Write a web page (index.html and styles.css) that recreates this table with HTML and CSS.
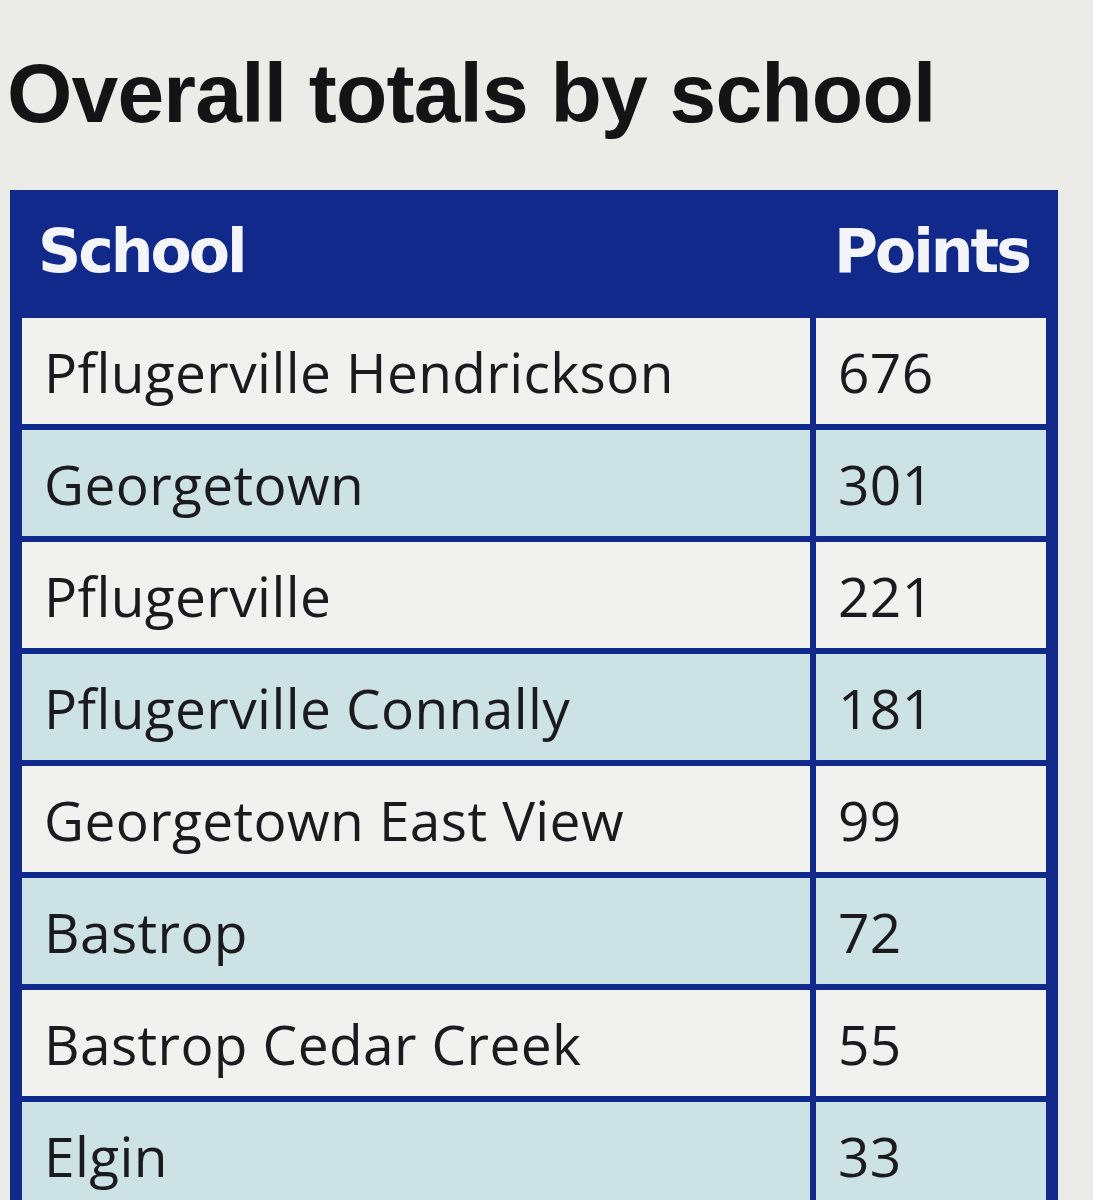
FILE: index.html
```html
<!DOCTYPE html>
<html>
<head>
<meta charset="utf-8">
<link rel="stylesheet" href="styles.css">
</head>
<body>
<h1 class="title">Overall totals by school</h1>
<div class="table">
  <div class="th th-school">School</div>
  <div class="th th-points">Points</div>
  <div class="td name">Pflugerville Hendrickson</div><div class="td pts">676</div>
  <div class="td name alt">Georgetown</div><div class="td pts alt">301</div>
  <div class="td name">Pflugerville</div><div class="td pts">221</div>
  <div class="td name alt">Pflugerville Connally</div><div class="td pts alt">181</div>
  <div class="td name">Georgetown East View</div><div class="td pts">99</div>
  <div class="td name alt">Bastrop</div><div class="td pts alt">72</div>
  <div class="td name">Bastrop Cedar Creek</div><div class="td pts">55</div>
  <div class="td name alt">Elgin</div><div class="td pts alt">33</div>
  <div class="td name"></div><div class="td pts"></div>
</div>
</body>
</html>
```
FILE: styles.css
```css
html, body {
  margin: 0;
  padding: 0;
  background: #ebebe7;
  overflow: hidden;
}
body {
  padding: 0 35px 0 10px;
  font-family: "Open Sans", "Liberation Sans", sans-serif;
  color: #1b1b1f;
}
.title {
  margin: 0 0 0 -3px;
  padding: 43px 0 0 0;
  height: 190px;
  box-sizing: border-box;
  font-family: "Liberation Sans", Arial, sans-serif;
  font-weight: 700;
  font-size: 84px;
  line-height: 100px;
  color: #141416;
  letter-spacing: -0.8px;
}
.table {
  display: grid;
  grid-template-columns: 1fr 230px;
  column-gap: 6px;
  row-gap: 6px;
  background: #10298a;
  padding: 0 12px 12px 12px;
}
.th {
  height: 122px;
  display: flex;
  align-items: center;
  color: #f3f5fb;
  font-family: "DejaVu Sans", Verdana, sans-serif;
  font-weight: 700;
  font-size: 60px;
  letter-spacing: -3px;
}
.th-school {
  padding-left: 16px;
}
.th-points {
  padding-left: 18px;
  margin-right: -12px;
}
.td {
  height: 106px;
  display: flex;
  align-items: center;
  background: #f1f1ef;
  font-size: 55px;
  letter-spacing: 0.4px;
}
.td.alt {
  background: #cde2e5;
}
.name {
  padding-left: 22px;
}
.pts {
  padding-left: 22px;
}
```
